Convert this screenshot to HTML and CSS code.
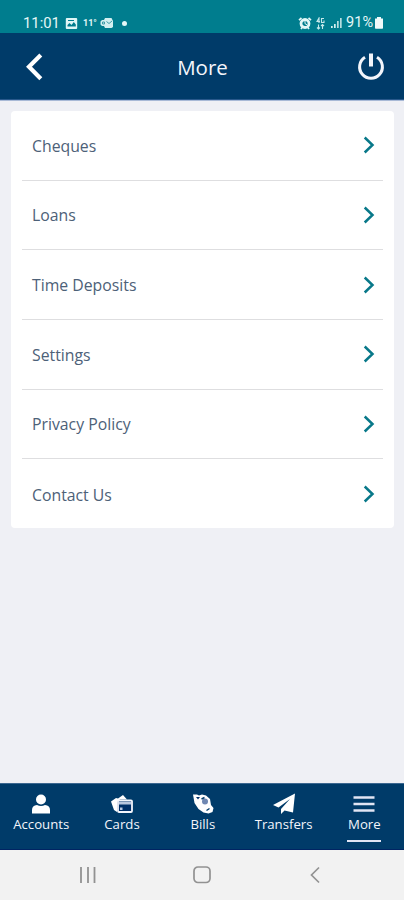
FILE: index.html
```html
<!DOCTYPE html>
<html lang="en">
<head>
<meta charset="utf-8">
<title>More</title>
<link rel="stylesheet" href="styles.css">
</head>
<body>
<div class="screen">
  <div class="status">
    <span class="clock">11:01</span>
    <svg class="pic" width="13" height="13" viewBox="0 0 13 13"><rect x=".8" y="1" width="11.4" height="11" rx="1" fill="#dff6f6"/><path d="M2.5 9.500V8l2-2 2 2 2.300-3 2 2.500v2zM3 3h6v1H3z" fill="#007d8e"/></svg>
    <span class="temp">11°</span>
    <svg class="mail" width="14" height="12" viewBox="0 0 14 12"><path d="M5 1h6.500l1.500 3v6l-1.500 1H5L4 9H2L.5 7.500v-3L2 3h2z" fill="#d3eff0"/><path d="M6.500 4.500l2.500 2 3-2.500M2.500 5v2h2V5z" fill="none" stroke="#409ca8"/></svg>
    <span class="dot"></span>
    <span class="grow"></span>
    <svg class="alarm" width="14" height="13" viewBox="0 0 14 13"><path d="M1 3.200L3.500 1M13 3.200L10.500 1M3 12l1.500-2M11 12L9.500 10" stroke="#e4f7f7" stroke-width="1.700"/><circle cx="7" cy="6.500" r="4" fill="none" stroke="#e4f7f7" stroke-width="2.800"/><path d="M7 4v2.700l2 1" fill="none" stroke="#e4f7f7"/></svg>
    <svg class="net" width="9" height="13" viewBox="0 0 9 13"><path d="M3 6V1L1 4.500h3M8 1.500H5.500v4H8v-2M2.500 7.500V12M1 10.500L2.500 12 4 10.500M6.500 12V7.500M5 9l1.500-1.500L8 9" fill="none" stroke="#c5e8ea" stroke-width="1.100"/></svg>
    <svg class="signal" width="12" height="12" viewBox="0 0 12 12"><path d="M1 9h1.700v2H1zM4 7h1.700v4H4z" fill="#d3eff0"/><path d="M7 4h1.700v7H7zM10 1h1.700v10H10z" fill="#b4dde0"/></svg>
    <span class="percent">91%</span>
    <svg class="battery" width="10" height="12" viewBox="0 0 10 12"><path d="M3 0h4v1.500h2V11q0 .7-.7.7H1.700Q1 11.700 1 11V1.500h2z" fill="#effafa"/></svg>
  </div>
  <header class="header">
    <svg width="18" height="28" viewBox="0 0 18 28"><path d="M15.800 2L4 13.700l11.800 12" fill="none" stroke="#fff" stroke-width="4.200"/></svg>
    <h1>More</h1>
    <svg width="28" height="28" viewBox="0 0 28 28"><path d="M8 4.200A11.400 11.400 0 1 0 20 4.200" fill="none" stroke="#f3f5fb" stroke-width="3"/><path d="M14 .5v13" stroke="#f3f5fb" stroke-width="4"/></svg>
  </header>
  <main class="main">
    <ul class="list">
      <li><span>Cheques</span><svg class="go" viewBox="0 0 12 18"><path d="M1.700 1.500L9.500 9l-7.800 7.500"/></svg></li>
      <li><span>Loans</span><svg class="go" viewBox="0 0 12 18"><path d="M1.700 1.500L9.500 9l-7.800 7.500"/></svg></li>
      <li><span>Time Deposits</span><svg class="go" viewBox="0 0 12 18"><path d="M1.700 1.500L9.500 9l-7.800 7.500"/></svg></li>
      <li><span>Settings</span><svg class="go" viewBox="0 0 12 18"><path d="M1.700 1.500L9.500 9l-7.800 7.500"/></svg></li>
      <li><span>Privacy Policy</span><svg class="go" viewBox="0 0 12 18"><path d="M1.700 1.500L9.500 9l-7.800 7.500"/></svg></li>
      <li><span>Contact Us</span><svg class="go" viewBox="0 0 12 18"><path d="M1.700 1.500L9.500 9l-7.800 7.500"/></svg></li>
    </ul>
  </main>
  <nav class="tabs">
    <a class="tab"><svg viewBox="0 0 24 22"><circle cx="12" cy="6.500" r="5" fill="#fff"/><path d="M3 20.500v-3.500q0-4.500 5-5 4 2 8 0 5 .5 5 5v3.500z" fill="#fff"/></svg><span>Accounts</span></a>
    <a class="tab"><svg viewBox="0 0 24 22"><path d="M1 8.500L6 5l2 .5L13 2l4 4.500H10L7 9v10l-3-2z" fill="#fff"/><rect x="8" y="7.300" width="14" height="11.700" rx="1" fill="#002f68" stroke="#f4f6fc" stroke-width="1.800"/><path d="M9 8.500h12v3H9zM10 14.500h2.500V17H10z" fill="#b9c6de"/></svg><span>Cards</span></a>
    <a class="tab"><svg viewBox="0 0 24 22"><path d="M2 1.500h4l2 1 3-1 4 1 4 3.500 1 6 2.500 3-1 4-4 1.500-5-1-5-3.500-4-6z" fill="#fff"/><path d="M5 4h4L7 6.500z" fill="#002f68"/><circle cx="14" cy="8.500" r="3" fill="#7088b2"/><path d="M10.500 6l3-1.500M15.500 17.500l3-2" fill="none" stroke="#003b69" stroke-width="1.400"/></svg><span>Bills</span></a>
    <a class="tab"><svg viewBox="0 0 24 22"><path d="M23 .5L1 12l5.500 2.500L18 6 9 16v5l3.500-3.500 8.500 2z" fill="#fff"/></svg><span>Transfers</span></a>
    <a class="tab active"><svg viewBox="0 0 24 22"><path d="M1.500 4.500h21M1.500 11h21M1.500 17.500h21" stroke="#e1e5f4" stroke-width="2.300"/></svg><span>More</span></a>
  </nav>
  <div class="system">
    <svg width="18" height="18" viewBox="0 0 18 18"><path d="M2 1v16M9 1v16M15.500 1v16" stroke="#929292" stroke-width="1.800"/></svg>
    <svg width="18" height="18" viewBox="0 0 18 18"><rect x="1" y="1" width="16" height="15.500" rx="4" fill="none" stroke="#929292" stroke-width="1.700"/></svg>
    <svg width="18" height="18" viewBox="0 0 18 18"><path d="M13 1.500L5.500 9l7.500 7.500" fill="none" stroke="#929292" stroke-width="1.700"/></svg>
  </div>
</div>
</body>
</html>
```
FILE: styles.css
```css
* { box-sizing: border-box; }
body { margin: 0; font-family: "Open Sans", sans-serif; }
.screen { width: 404px; height: 900px; display: flex; flex-direction: column; background: #eff0f5; overflow: hidden; }
svg { display: block; flex-shrink: 0; }
.status { height: 33px; background: #007d8e; color: #e4f7f7; padding: 13px 20px 0 23px; display: flex; align-items: center; font-family: Roboto, sans-serif; line-height: 20px; }
.clock { width: 42px; font-size: 14.800px; }
.temp { font-size: 9px; font-weight: 700; margin-left: 5px; width: 17px; }
.dot { width: 5px; height: 5px; border-radius: 50%; background: #e4f7f7; margin-left: 8px; }
.grow { flex: 1; }
.alarm { margin-right: 4px; }
.net { margin-right: 5px; }
.percent { font-size: 14.500px; margin-left: 4px; }
.battery { margin-left: 1px; }
.header { height: 67px; background: #003b69; border-bottom: 1px solid #28588b; color: #f3f5fb; display: flex; align-items: center; justify-content: space-between; padding: 1px 19px 0 25px; }
.header h1 { margin: 0 0 0 5px; font-size: 20.500px; font-weight: 400; line-height: 28px; }
.main { flex: 1; padding: 10px 10px 0 11px; border-top: 1px solid #a8b9d6; }
.list { margin: 0; padding: 0 11px; list-style: none; background: #fff; border-radius: 4px; height: 417px; }
.list li { height: 69.700px; display: flex; align-items: center; justify-content: space-between; padding: 0 8px 0 10px; border-bottom: 1.500px solid #dedee0; color: #4d6178; font-size: 15.800px; }
.list li span { padding-top: .5px; }
.list li:last-child { border: 0; }
.go { width: 12px; height: 18px; fill: none; stroke: #087889; stroke-width: 2.500; }
.tabs { height: 67px; background: #003b69; border-top: 1px solid #3b6790; border-bottom: 1px solid #002463; display: grid; grid-template-columns: repeat(5, 80.800px); padding: 9px 0 0 .8px; }
.tab { display: flex; flex-direction: column; align-items: center; color: #f3f5fb; font-size: 13.200px; font-weight: 500; line-height: 18px; }
.tab svg { width: 24px; height: 22px; }
.active::after { content: ""; width: 34px; height: 2px; background: #e1e5f4; margin-top: 7px; }
.system { height: 50px; background: #f2f2f2; display: flex; align-items: center; justify-content: space-between; padding: 0 80px 0 79px; }
```
